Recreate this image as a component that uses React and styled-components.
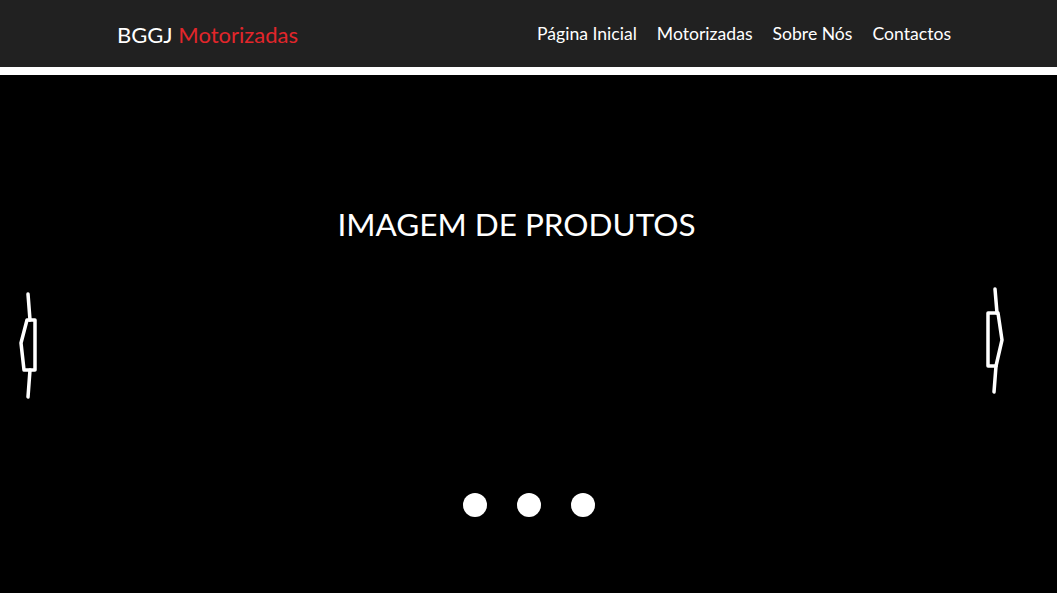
import styled, { createGlobalStyle } from "styled-components";

const Global = createGlobalStyle`
  html, body {
    margin: 0;
    padding: 0;
    background: #000;
  }
  body {
    font-family: Lato, "Open Sans", sans-serif;
  }
`;

const Page = styled.div`
  width: 1057px;
  height: 593px;
  display: flex;
  flex-direction: column;
  overflow: hidden;
`;

const Header = styled.header`
  height: 67px;
  background: #212121;
  border-bottom: 8px solid #fff;
  display: flex;
  align-items: center;
  justify-content: space-between;
  padding: 0 106px 0 117px;
`;

const Logo = styled.div`
  font-size: 22px;
  color: #fff;
  margin-top: 1px;
  span {
    color: #e3262b;
  }
`;

const Nav = styled.nav`
  display: flex;
  align-items: center;
  gap: 20px;
`;

const NavLink = styled.a`
  color: #fff;
  font-size: 17.6px;
  text-decoration: none;
`;

const Carousel = styled.section`
  position: relative;
  flex: 1;
  background: #000;
  display: flex;
  flex-direction: column;
  align-items: center;
`;

const Title = styled.h1`
  margin: 130px 24px 0 0;
  font-weight: 400;
  font-size: 31.5px;
  color: #fff;
`;

const Dots = styled.div`
  margin-top: auto;
  margin-bottom: 76px;
  display: flex;
  gap: 30px;
`;

const Dot = styled.span`
  width: 24px;
  height: 24px;
  border-radius: 50%;
  background: #fff;
`;

const Arrow = styled.svg`
  position: absolute;
  top: ${(p) => p.top}px;
  ${(p) => (p.side === "left" ? "left: 14px;" : "right: 46px;")}
`;

function LeftArrow() {
  return (
    <Arrow side="left" top={216} width="30" height="110" viewBox="0 0 30 110">
      <g fill="none" stroke="#fff" strokeWidth="3.5" strokeLinejoin="round" strokeLinecap="round">
        <path d="M14 3 L16 29 M16 79 L14 106" />
        <path d="M13 29 L21 29 L21 79 L10 79 L7 52 Z" />
      </g>
    </Arrow>
  );
}

function RightArrow() {
  return (
    <Arrow side="right" top={211} width="30" height="110" viewBox="0 0 30 110">
      <g fill="none" stroke="#fff" strokeWidth="3.5" strokeLinejoin="round" strokeLinecap="round">
        <path d="M14 3 L16 27 M15 80 L13 106" />
        <path d="M7 27 L17 27 L21 54 L15 80 L7 80 Z" />
      </g>
    </Arrow>
  );
}

export default function App() {
  return (
    <Page>
      <Global />
      <Header>
        <Logo>
          BGGJ <span>Motorizadas</span>
        </Logo>
        <Nav>
          <NavLink href="#">Página Inicial</NavLink>
          <NavLink href="#">Motorizadas</NavLink>
          <NavLink href="#">Sobre Nós</NavLink>
          <NavLink href="#">Contactos</NavLink>
        </Nav>
      </Header>
      <Carousel>
        <LeftArrow />
        <Title>IMAGEM DE PRODUTOS</Title>
        <RightArrow />
        <Dots>
          <Dot />
          <Dot />
          <Dot />
        </Dots>
      </Carousel>
    </Page>
  );
}
